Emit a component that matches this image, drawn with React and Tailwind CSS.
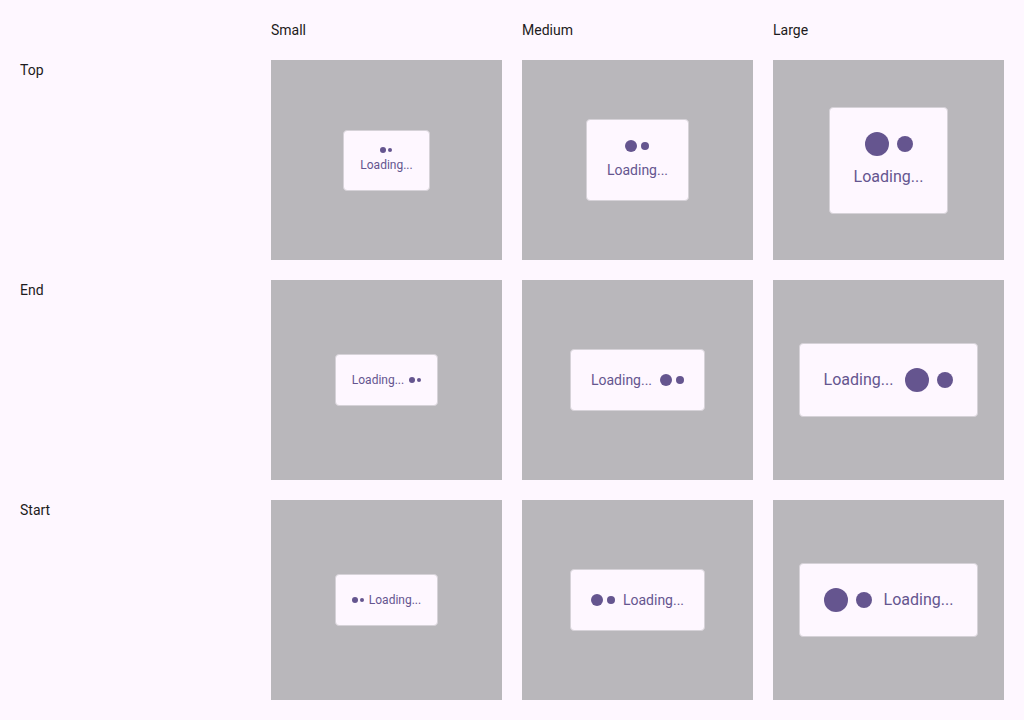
import React from "react";

const sizes = {
  small: {
    big: "w-[6px] h-[6px]",
    small: "w-[4px] h-[4px]",
    dotGap: "gap-[2px]",
    text: "text-[12px] leading-[16px]",
    vpad: "px-4 pt-4 pb-[17px]",
    vgap: "gap-[4px]",
    hpad: "px-4 py-[17px]",
    hgap: "gap-[5px]",
  },
  medium: {
    big: "w-[12px] h-[12px]",
    small: "w-[8px] h-[8px]",
    dotGap: "gap-[4px]",
    text: "text-[14px] leading-[20px]",
    vpad: "px-5 py-5",
    vgap: "gap-[8px]",
    hpad: "px-5 py-5",
    hgap: "gap-[8px]",
  },
  large: {
    big: "w-[24px] h-[24px]",
    small: "w-[16px] h-[16px]",
    dotGap: "gap-[8px]",
    text: "text-[16px] leading-[24px]",
    vpad: "px-6 py-6",
    vgap: "gap-[9px]",
    hpad: "px-6 py-6",
    hgap: "gap-[12px]",
  },
};

function Dots({ s }) {
  return (
    <div className={`flex items-center ${s.dotGap}`}>
      <div className={`${s.big} rounded-full bg-[#65558f]`} />
      <div className={`${s.small} rounded-full bg-[#65558f]`} />
    </div>
  );
}

function Card({ size, pos }) {
  const s = sizes[size];
  const text = <span className={`${s.text} text-[#65558f] whitespace-nowrap`}>Loading...</span>;
  if (pos === "top") {
    return (
      <div className={`flex flex-col items-center ${s.vgap} ${s.vpad} bg-[#fef7ff] border border-[#d6d2d8] rounded-[4px]`}>
        <Dots s={s} />
        {text}
      </div>
    );
  }
  return (
    <div className={`flex items-center ${s.hgap} ${s.hpad} bg-[#fef7ff] border border-[#d6d2d8] rounded-[4px]`}>
      {pos === "start" && <Dots s={s} />}
      {text}
      {pos === "end" && <Dots s={s} />}
    </div>
  );
}

export default function App() {
  const rows = [
    ["Top", "top"],
    ["End", "end"],
    ["Start", "start"],
  ];
  return (
    <div
      className="w-[1024px] h-[720px] bg-[#fef7ff] p-5 text-[#1d1b20] text-[14px] leading-[20px]"
      style={{ fontFamily: "Roboto, 'Liberation Sans', sans-serif" }}
    >
      <div className="grid grid-cols-[231px_231px_231px_231px] grid-rows-[20px_200px_200px_200px] gap-5">
        <div />
        <div>Small</div>
        <div>Medium</div>
        <div>Large</div>
        {rows.map(([label, pos]) => (
          <React.Fragment key={pos}>
            <div>{label}</div>
            {["small", "medium", "large"].map((size) => (
              <div key={size} className="bg-[#b9b7bb] flex items-center justify-center">
                <Card size={size} pos={pos} />
              </div>
            ))}
          </React.Fragment>
        ))}
      </div>
    </div>
  );
}
